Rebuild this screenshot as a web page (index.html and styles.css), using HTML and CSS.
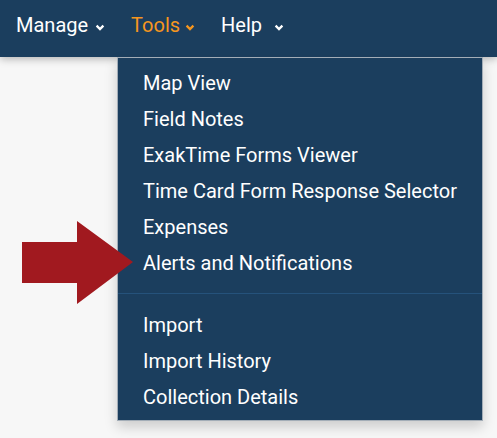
FILE: index.html
```html
<!DOCTYPE html>
<html lang="en">
<head>
<meta charset="utf-8">
<title>Tools menu</title>
<link rel="stylesheet" href="styles.css">
</head>
<body>
<nav class="navbar">
  <div class="nav-item">
    <span class="nav-label">Manage</span>
    <svg class="chev" viewBox="0 0 10 7" width="10" height="7"><path d="M1.6 1.6 L5 5 L8.4 1.6" /></svg>
  </div>
  <div class="nav-item nav-item--active">
    <span class="nav-label">Tools</span>
    <svg class="chev chev--tight" viewBox="0 0 10 7" width="10" height="7"><path d="M1.6 1.6 L5 5 L8.4 1.6" /></svg>
  </div>
  <div class="nav-item">
    <span class="nav-label">Help</span>
    <svg class="chev chev--wide" viewBox="0 0 10 7" width="10" height="7"><path d="M1.6 1.6 L5 5 L8.4 1.6" /></svg>
  </div>
</nav>

<ul class="dropdown">
  <li class="dropdown-item">Map View</li>
  <li class="dropdown-item">Field Notes</li>
  <li class="dropdown-item">ExakTime Forms Viewer</li>
  <li class="dropdown-item">Time Card Form Response Selector</li>
  <li class="dropdown-item">Expenses</li>
  <li class="dropdown-item">Alerts and Notifications</li>
  <li class="dropdown-divider"></li>
  <li class="dropdown-item">Import</li>
  <li class="dropdown-item">Import History</li>
  <li class="dropdown-item">Collection Details</li>
</ul>

<svg class="pointer-arrow" viewBox="0 0 140 100" width="140" height="100">
  <polygon points="22,42 77,42 77,21 133,62 77,104 77,83 22,83" />
</svg>
</body>
</html>
```

FILE: styles.css
```css
html, body {
  margin: 0;
  padding: 0;
}

body {
  background: #f7f7f7;
  font-family: Roboto, "Liberation Sans", sans-serif;
  width: 497px;
  height: 438px;
  overflow: hidden;
  position: relative;
}

.navbar {
  height: 57px;
  box-sizing: border-box;
  background: #1b3e5e;
  box-shadow: 0 2px 8px rgba(0, 0, 0, 0.28);
  display: flex;
  align-items: flex-start;
  gap: 26px;
  padding: 14px 0 0 16px;
  position: relative;
  z-index: 1;
}

.nav-item {
  display: flex;
  align-items: flex-start;
  color: #ffffff;
  font-size: 20px;
  line-height: 23px;
}

.nav-item--active {
  color: #f6961e;
}

.chev {
  margin-top: 10px;
  margin-left: 7px;
  width: 10px;
  height: 7px;
  fill: none;
  stroke: currentColor;
  stroke-width: 2.3;
  stroke-linecap: butt;
  stroke-linejoin: miter;
}

.chev--tight {
  margin-left: 5px;
}

.chev--wide {
  margin-left: 12px;
}

.dropdown {
  position: absolute;
  left: 117px;
  top: 57px;
  width: 366px;
  box-sizing: border-box;
  margin: 0;
  padding: 7px 0 5px;
  list-style: none;
  background: #1b3e5e;
  border: 1px solid #a3adb7;
  box-shadow: 0 6px 12px rgba(0, 0, 0, 0.175);
  z-index: 2;
}

.dropdown-item {
  color: #ffffff;
  font-size: 20px;
  line-height: 36px;
  padding-left: 25px;
  white-space: nowrap;
}

.dropdown-divider {
  height: 1px;
  margin: 12px 0 13px;
  background: #25527b;
}

.pointer-arrow {
  position: absolute;
  left: 0;
  top: 200px;
  z-index: 3;
  overflow: visible;
}

.pointer-arrow polygon {
  fill: #a1191f;
}
```
